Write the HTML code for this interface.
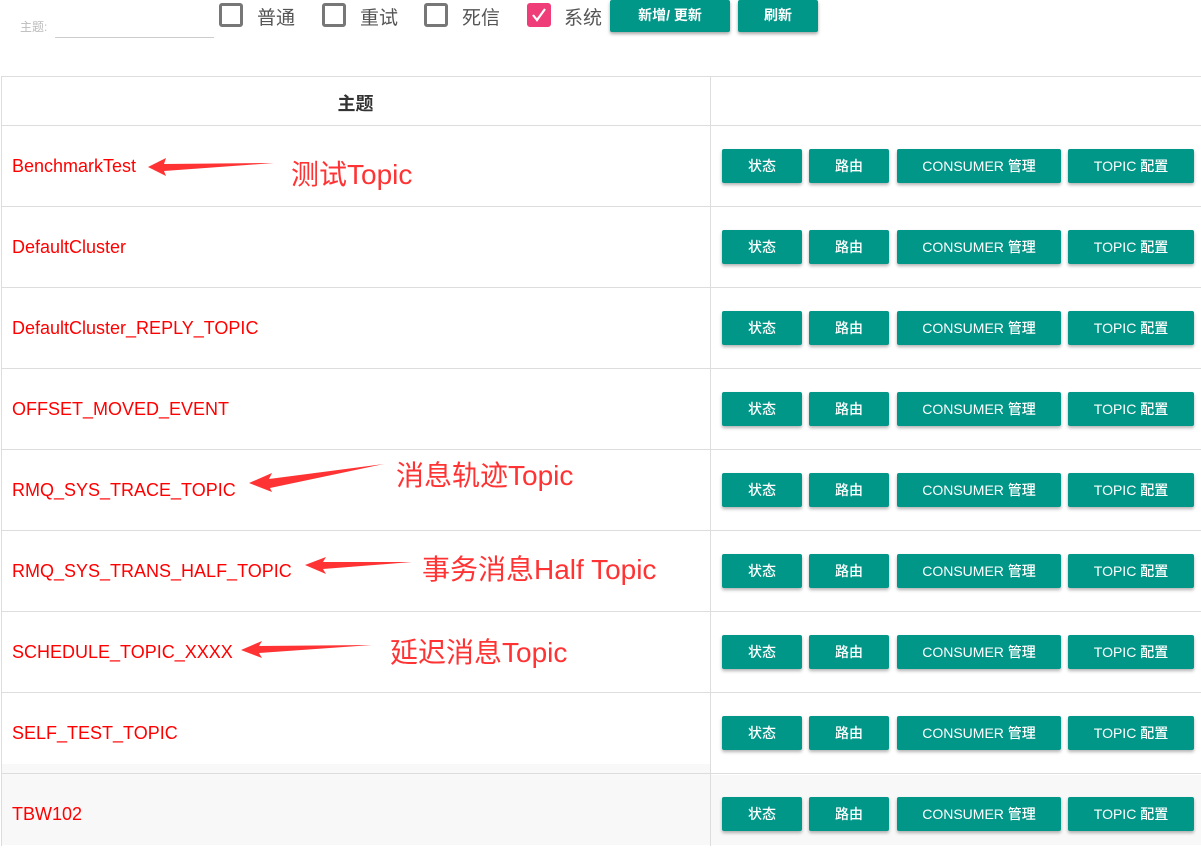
<!DOCTYPE html>
<html><head><meta charset="utf-8"><style>
*{box-sizing:border-box;margin:0;padding:0}
body{width:1201px;height:845px;overflow:hidden;background:#fff;font-family:"Liberation Sans","Noto Sans CJK SC",sans-serif;position:relative}
.abs{position:absolute}
.cb{position:absolute;top:3px;width:24px;height:24px;border:3px solid #777;border-radius:3px}
.cbl{position:absolute;top:3px;font-size:19px;color:#555}
.tb{position:absolute;top:0;height:32px;background:#009688;color:#fff;font-size:14px;font-weight:bold;text-align:center;line-height:31px;border-radius:2px;box-shadow:0 2px 3px rgba(0,0,0,.35)}
.row{position:absolute;left:1px;width:1200px;height:81px;border-bottom:1px solid #ddd}
.name{position:absolute;left:11px;top:30px;font-size:18px;color:#f00}
.b{position:absolute;top:23px;height:34px;background:#009688;color:#fff;font-size:14px;font-weight:500;text-align:center;line-height:34px;border-radius:2px;box-shadow:0 2px 3px rgba(0,0,0,.3)}
.ann{position:absolute;color:#f33;font-size:28px;font-family:"Liberation Sans","Noto Sans CJK SC",sans-serif}
</style></head><body>
<div class="abs" style="left:20px;top:18px;font-size:12px;color:#bbb">主题:</div>
<div class="abs" style="left:55px;top:37px;width:159px;border-bottom:1px solid #ccc"></div>
<div class="cb" style="left:219px"></div><div class="cbl" style="left:257px">普通</div>
<div class="cb" style="left:322px"></div><div class="cbl" style="left:360px">重试</div>
<div class="cb" style="left:424px"></div><div class="cbl" style="left:462px">死信</div>
<div class="cb" style="left:527px;background:#ee3d78;border-color:#ee3d78"><svg width="18" height="18" style="position:absolute;left:0;top:0"><path d="M3 9l4 5 8-11" stroke="#fff" stroke-width="2.2" fill="none"/></svg></div><div class="cbl" style="left:564px">系统</div>
<div class="tb" style="left:610px;width:120px">新增/ 更新</div>
<div class="tb" style="left:738px;width:80px">刷新</div>

<div class="abs" style="left:1px;top:76px;width:1200px;height:770px;border-left:1px solid #ddd;border-top:1px solid #ddd"></div>
<div class="abs" style="left:710px;top:76px;height:770px;border-left:1px solid #ddd"></div>
<div class="abs" style="left:1px;top:76px;width:1200px;height:50px;border-bottom:1px solid #ddd"></div>
<div class="abs" style="left:1px;top:90px;width:709px;text-align:center;font-size:18px;font-weight:bold;color:#333">主题</div>
<div class="abs" style="left:2px;top:764px;width:708px;height:81px;background:#f8f8f8"></div>
<div class="abs" style="left:711px;top:775px;width:490px;height:70px;background:#f8f8f8"></div>

<div id="rows"></div>
<script>
var n=["BenchmarkTest","DefaultCluster","DefaultCluster_REPLY_TOPIC","OFFSET_MOVED_EVENT","RMQ_SYS_TRACE_TOPIC","RMQ_SYS_TRANS_HALF_TOPIC","SCHEDULE_TOPIC_XXXX","SELF_TEST_TOPIC","TBW102"];
var h="";
n.forEach(function(s,i){var t=126+i*81;
h+='<div class="row" style="top:'+t+'px;'+(i==8?'border-bottom:none':'')+'"><div class="name">'+s+'</div>'+
'<div class="b" style="left:721px;width:80px">状态</div><div class="b" style="left:808px;width:80px">路由</div>'+
'<div class="b" style="left:896px;width:164px">CONSUMER 管理</div><div class="b" style="left:1067px;width:126px">TOPIC 配置</div></div>';});
document.getElementById("rows").innerHTML=h;
</script>
<svg class="abs" style="left:0;top:0" width="1201" height="845">
<g fill="#f33">
<polygon points="148,167 166,158 164,164 274,163 164,171 166,176"/>
<polygon points="249,483 272,473 269,479 384,464 270,488 272,492"/>
<polygon points="305,565 326,557 323,562 412,562 323,569 326,574"/>
<polygon points="241,650 262,641 259,646 372,645 259,653 262,658"/>
</g></svg>
<div class="ann" style="left:291px;top:153px">测试Topic</div>
<div class="ann" style="left:396px;top:454px">消息轨迹Topic</div>
<div class="ann" style="left:422px;top:548px">事务消息Half Topic</div>
<div class="ann" style="left:390px;top:631px">延迟消息Topic</div>
</body></html>
